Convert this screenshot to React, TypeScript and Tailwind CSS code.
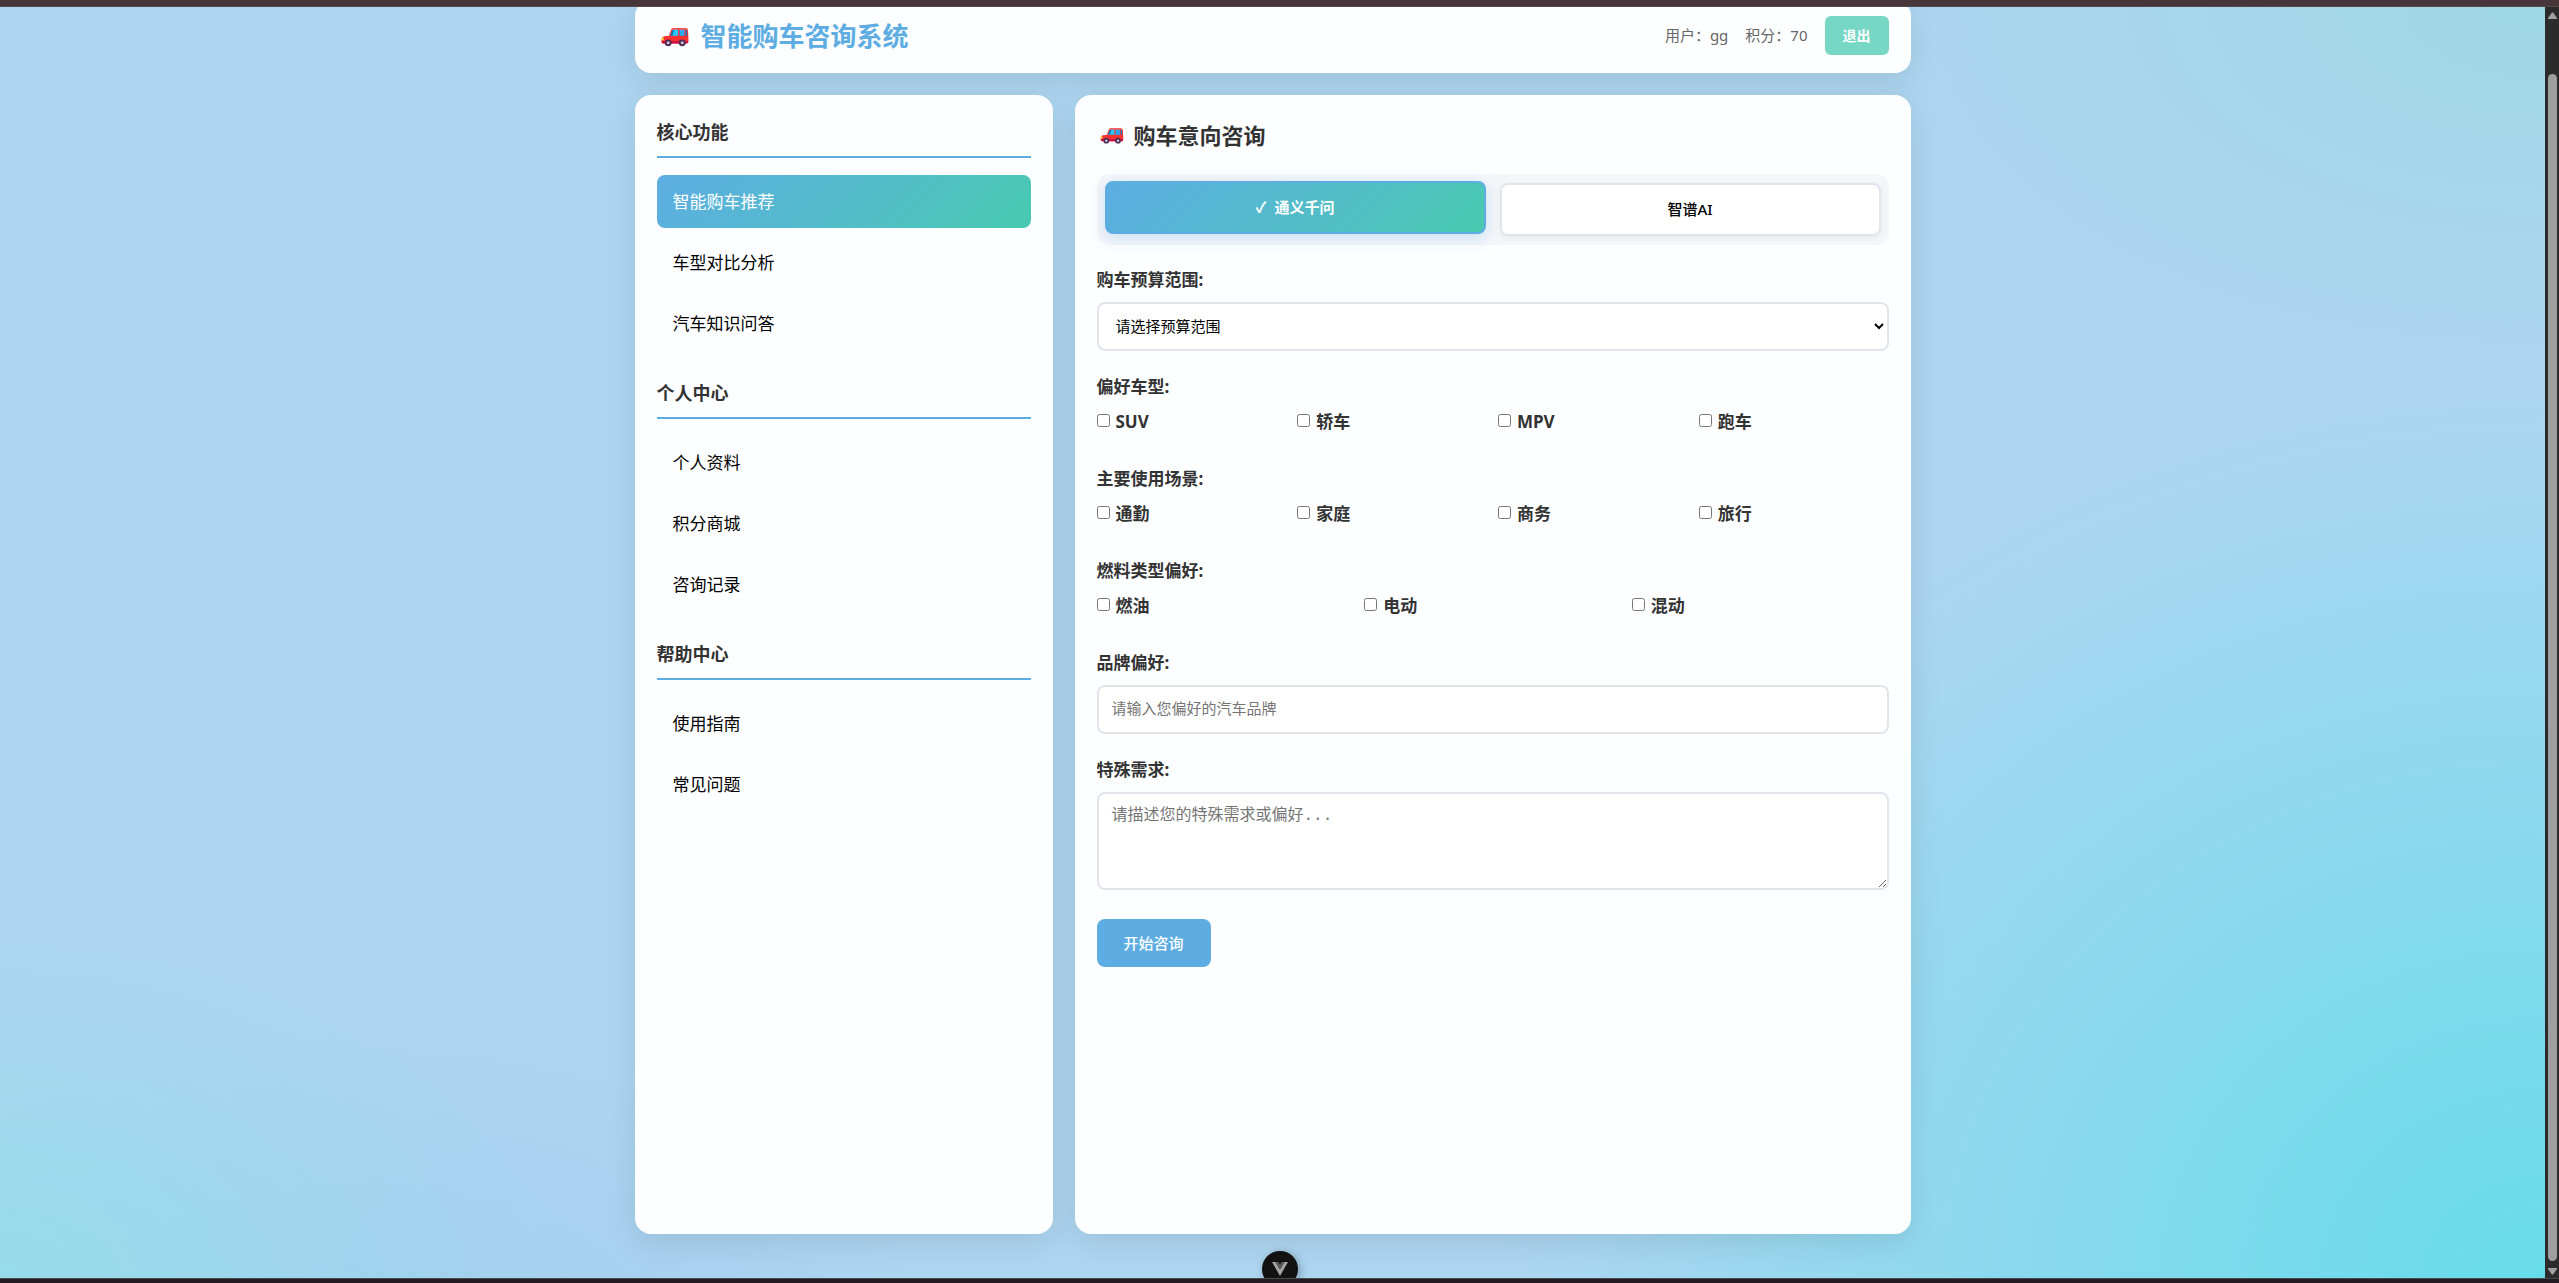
import React, { useState, type FC, type FormEvent, type ReactNode } from "react";
import clsx from "clsx";

const menuSections = [
	{ title: "核心功能", items: ["智能购车推荐", "车型对比分析", "汽车知识问答"] },
	{ title: "个人中心", items: ["个人资料", "积分商城", "咨询记录"] },
	{ title: "帮助中心", items: ["使用指南", "常见问题"] },
];

const models = ["通义千问", "智谱AI"];

const Car: FC<{ className: string }> = ({ className }) => (
	<svg viewBox="0 0 36 24" className={className} aria-hidden="true">
		<path
			d="M5 14.5 Q5 12.4 7.5 12.2 L12 11.8 L14.2 5.4 Q14.8 4 16.6 4 H28.6 Q30.8 4 31 6.4 L31.4 13 V17.6 Q31.4 19.4 29.6 19.4 H6.4 Q4.4 19.4 4.4 17.4 Z"
			fill="#f8312f"
		/>
		<path d="M15 4.6 H29.8 L30.4 5.8 H14.4 Z" fill="#ff6a6d" />
		<path d="M13.4 11.8 L15.4 6.4 Q15.7 5.8 16.4 5.8 H21 V11.8 Z" fill="#26c9fc" />
		<path d="M22.4 5.8 H27.4 V11.8 H22.4 Z" fill="#26a9fc" />
		<path d="M28.6 5.8 H29.8 L30.2 11.8 H28.6 Z" fill="#0084ce" />
		<path d="M13.4 11.8 L15.4 6.4 L17.4 5.8 L15.4 11.8 Z" fill="#0074ba" />
		<rect x="4.4" y="13.6" width="2.4" height="2.8" rx="1" fill="#ffd23c" />
		<path d="M4.4 17.2 H31.4 V17.6 Q31.4 19.4 29.6 19.4 H6.4 Q4.4 19.4 4.4 17.2 Z" fill="#ca0b4a" />
		<circle cx="11.2" cy="18.8" r="3.4" fill="#4a2a52" />
		<circle cx="11.2" cy="18.8" r="1.5" fill="#cdc4d6" />
		<circle cx="25.2" cy="18.8" r="3.4" fill="#4a2a52" />
		<circle cx="25.2" cy="18.8" r="1.5" fill="#cdc4d6" />
	</svg>
);

const Card: FC<{ className?: string; children: ReactNode }> = ({ className, children }) => (
	<section
		className={clsx(
			"rounded-2xl bg-white/96 shadow-[0_8px_32px_rgba(0,0,0,0.1)]",
			className
		)}
	>
		{children}
	</section>
);

const CheckGroup: FC<{ legend: string; options: string[]; className: string }> = ({
	legend,
	options,
	className,
}) => (
	<fieldset className="mb-[30px]">
		<legend className="mb-[9px] leading-[27px] font-bold">{legend}</legend>
		<div className={clsx("grid gap-[11px]", className)}>
			{options.map((option) => (
				<label key={option} className="flex items-center gap-1.5 leading-[26px] font-bold">
					<input type="checkbox" className="mb-1 size-[13px]" />
					{option}
				</label>
			))}
		</div>
	</fieldset>
);

const Sidebar: FC = () => {
	const [active, setActive] = useState("智能购车推荐");

	return (
		<Card className="p-[22px]">
			<nav>
				{menuSections.map(({ title, items }) => (
					<div key={title} className="mb-7">
						<h3 className="mb-[17px] border-b-2 border-[#5dade2] pb-[9px] text-lg leading-[30px] font-bold">
							{title}
						</h3>
						<ul className="flex flex-col gap-2">
							{items.map((item) => (
								<li key={item}>
									<a
										href="#"
										onClick={() => setActive(item)}
										className={clsx(
											"block rounded-lg px-4 py-[13px] leading-[27px]",
											active === item
												? "bg-linear-135 from-[#5dade2] to-[#48c9b0] text-white"
												: "text-black"
										)}
									>
										{item}
									</a>
								</li>
							))}
						</ul>
					</div>
				))}
			</nav>
		</Card>
	);
};

const ConsultForm: FC = () => {
	const [model, setModel] = useState(models[0]);

	const onFormSubmit = (event: FormEvent<HTMLFormElement>) => {
		event.preventDefault();
	};

	return (
		<Card className="p-[22px]">
			<h2 className="mb-[21px] flex items-center gap-[7px] text-[22px] leading-9 font-bold">
				<Car className="w-[30px]" />
				购车意向咨询
			</h2>
			<div className="mb-[21px] grid grid-cols-2 gap-[14px] rounded-xl bg-[#f5f6fa] px-2 py-[9px]">
				{models.map((name) => (
					<button
						key={name}
						type="button"
						onClick={() => setModel(name)}
						className={clsx(
							"h-[53px] rounded-lg border-2 text-[15px]",
							model === name
								? "-translate-y-0.5 border-[#5dade2] bg-linear-135 from-[#5dade2] to-[#48c9b0] font-bold text-white shadow-[0_4px_15px_rgba(93,173,226,0.3)]"
								: "border-[#e1e5eb] bg-white font-medium text-black shadow-[0_2px_6px_rgba(0,0,0,0.06)]"
						)}
					>
						{model === name ? <span className="mr-2">✓</span> : null}
						{name}
					</button>
				))}
			</div>
			<form onSubmit={onFormSubmit}>
				<div className="mb-[22px]">
					<label htmlFor="budget" className="mb-[9px] block leading-[27px] font-bold">
						购车预算范围:
					</label>
					<select
						id="budget"
						className="block h-[49px] w-full rounded-lg border-2 border-[#e1e5eb] bg-white px-[13px] pb-0.5 text-[15px] text-black"
					>
						<option>请选择预算范围</option>
						<option>10万以下</option>
						<option>10-20万</option>
						<option>20-30万</option>
					</select>
				</div>
				<CheckGroup
					legend="偏好车型:"
					options={["SUV", "轿车", "MPV", "跑车"]}
					className="grid-cols-4"
				/>
				<CheckGroup
					legend="主要使用场景:"
					options={["通勤", "家庭", "商务", "旅行"]}
					className="grid-cols-4"
				/>
				<CheckGroup
					legend="燃料类型偏好:"
					options={["燃油", "电动", "混动"]}
					className="grid-cols-3"
				/>
				<div className="mb-[22px]">
					<label htmlFor="brand" className="mb-[9px] block leading-[27px] font-bold">
						品牌偏好:
					</label>
					<input
						id="brand"
						type="text"
						placeholder="请输入您偏好的汽车品牌"
						className="block h-[49px] w-full rounded-lg border-2 border-[#e1e5eb] bg-white px-[13px] pb-1 text-[15px] placeholder:text-[#757575]"
					/>
				</div>
				<div className="mb-[29px]">
					<label htmlFor="needs" className="mb-[9px] block leading-[27px] font-bold">
						特殊需求:
					</label>
					<textarea
						id="needs"
						placeholder="请描述您的特殊需求或偏好..."
						className="block h-[98px] w-full resize-y rounded-lg border-2 border-[#e1e5eb] bg-white px-[13px] py-3 font-['Liberation_Mono','Noto_Sans_CJK_SC',monospace] text-base leading-5 placeholder:text-[#757575]"
					/>
				</div>
				<button
					type="submit"
					className="h-12 w-[114px] rounded-lg bg-[#5dade2] text-[15px] font-medium text-white"
				>
					开始咨询
				</button>
			</form>
		</Card>
	);
};

const ScrollRail: FC = () => (
	<div className="flex w-[14px] flex-col items-center bg-[#2b2b2b] pt-3 pb-2" aria-hidden="true">
		<svg viewBox="0 0 9 7" className="h-[7px] w-[9px]">
			<path d="M3.5 1 Q4.5 -0.5 5.5 1 L9 6 V7 H0 V6 Z" fill="#a0a0a0" />
		</svg>
		<div className="mt-[55px] mb-[7px] w-[9px] flex-1 rounded-full bg-[#9f9f9f]" />
		<svg viewBox="0 0 9 7" className="h-[7px] w-[9px]">
			<path d="M3.5 6 Q4.5 7.5 5.5 6 L9 1 V0 H0 V1 Z" fill="#a0a0a0" />
		</svg>
	</div>
);

export default function App() {
	return (
		<div className="flex min-h-screen font-['Noto_Sans','Noto_Sans_CJK_SC',sans-serif] text-[17px] text-[#333]">
			<div className="flex flex-1 bg-[#aed6f1] bg-[radial-gradient(1050px_910px_at_100%_100%,#66dceb,rgba(102,220,235,0)),radial-gradient(680px_380px_at_100%_0%,#9dd7e3,rgba(157,215,227,0)),radial-gradient(560px_370px_at_0%_100%,#97dbe9,rgba(151,219,233,0)),radial-gradient(600px_360px_at_14%_108%,#a0ccf0,rgba(160,204,240,0))]">
				<div className="mx-auto flex w-full max-w-[1276px] flex-col gap-[22px] pb-[49px]">
					<Card className="flex items-center justify-between px-[22px] pt-4 pb-[18px]">
						<h1 className="flex items-center gap-2 text-[26px] leading-9 font-bold text-[#5dade2]">
							<Car className="w-9" />
							智能购车咨询系统
						</h1>
						<div className="flex items-center gap-[17px] text-[15px] text-[#666]">
							<span>用户：gg</span>
							<span>积分：70</span>
							<button
								type="button"
								className="h-[39px] w-16 rounded-md bg-[#76d7c4] text-sm font-bold text-white"
							>
								退出
							</button>
						</div>
					</Card>
					<div className="grid flex-1 grid-cols-[1fr_2fr] gap-[22px]">
						<Sidebar />
						<ConsultForm />
					</div>
				</div>
			</div>
			<ScrollRail />

			<button
				type="button"
				aria-label="Vue DevTools"
				className="fixed -bottom-1 left-1/2 flex size-9 -translate-x-1/2 items-center justify-center rounded-full bg-[#121212] shadow-[2px_2px_8px_rgba(0,0,0,0.3)]"
			>
				<svg viewBox="0 0 16 14" className="h-[14px] w-4">
					<path d="M0 0 H3.6 L8 7.6 L12.4 0 H16 L8 14 Z" fill="#a3a3a3" />
					<path d="M3.6 0 H6.4 L8 2.8 L9.6 0 H12.4 L8 7.6 Z" fill="#5c5c5c" />
				</svg>
			</button>

			{/* window frame */}
			<div className="fixed inset-x-0 top-0 h-[7px] border-b border-[#54484b] bg-[#473639]" />
			<div className="fixed inset-x-0 bottom-0 h-[5px] border-t border-[#4a4a4c] bg-[#231c22]" />
		</div>
	);
}
